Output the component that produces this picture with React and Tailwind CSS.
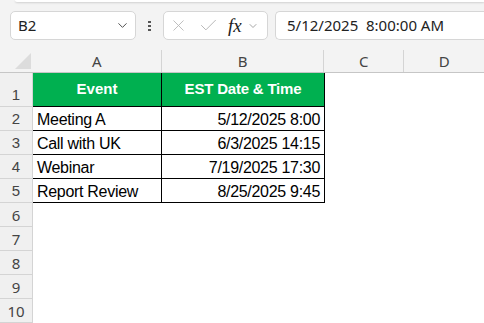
import { ChevronDown, X, Check } from "lucide-react";

const rows = [
    ["Meeting A", "5/12/2025 8:00"],
    ["Call with UK", "6/3/2025 14:15"],
    ["Webinar", "7/19/2025 17:30"],
    ["Report Review", "8/25/2025 9:45"],
];

function RowHead({ n, tall }) {
    return (
        <div
            className={`w-[33px] shrink-0 flex items-end justify-center border-r border-b border-[#d4d4d4] bg-[#f0f0f0] text-[15px] leading-[18px] text-[#444] pb-[2px] ${
                tall ? "h-[34px]" : "h-[24px]"
            }`}
        >
            {n}
        </div>
    );
}

function App() {
    return (
        <div className="w-[484px] h-[323px] overflow-hidden bg-[#f3f3f3] font-['Noto_Sans',sans-serif]">
            <div className="h-[2px] ml-[15px] bg-white rounded-bl-[4px] shadow-[0_1px_2px_rgba(0,0,0,0.15)]"></div>

            {/* formula bar */}
            <div className="flex items-center mt-[9px] h-[29px]">
                <div className="ml-[10px] w-[126px] h-[29px] flex items-center justify-between bg-white border border-[#d6d6d6] rounded-[5px] pl-[7px] pr-[5px]">
                    <span className="text-[15px] text-[#222]">B2</span>
                    <ChevronDown size={15} strokeWidth={1.5} className="text-[#444]" />
                </div>
                <div className="w-[27px] flex flex-col items-center gap-[2px]">
                    <span className="w-[3px] h-[2px] bg-[#555]"></span>
                    <span className="w-[3px] h-[2px] bg-[#555]"></span>
                    <span className="w-[3px] h-[2px] bg-[#555]"></span>
                </div>
                <div className="w-[105px] h-[29px] flex items-center bg-white border border-[#d6d6d6] rounded-[5px]">
                    <X size={19} strokeWidth={1.1} className="ml-[5px] text-[#b5b5b5]" />
                    <Check size={21} strokeWidth={1.1} className="ml-[10px] text-[#b5b5b5]" />
                    <span className="ml-[9px] text-[19px] italic text-[#222] font-['Liberation_Serif',serif] leading-none">
                        fx
                    </span>
                    <ChevronDown size={12} strokeWidth={1.5} className="ml-[5px] text-[#888]" />
                </div>
                <div className="ml-[7px] flex-1 h-[29px] flex items-center bg-white border border-[#d6d6d6] border-r-0 rounded-l-[5px] pl-[11px]">
                    <span className="text-[15px] text-[#222] whitespace-pre">5/12/2025  8:00:00 AM</span>
                </div>
            </div>

            {/* column headers */}
            <div className="flex mt-[10px] h-[23px] border-b border-[#c6c6c6] text-[15px] text-[#444]">
                <div className="w-[33px] shrink-0 relative">
                    <svg width="16" height="16" viewBox="0 0 16 16" className="absolute left-[15px] top-[3px]">
                        <polygon points="16,0 16,16 0,16" fill="#dcdcdc" />
                    </svg>
                </div>
                <div className="w-[129px] flex items-center justify-center border-r border-[#d4d4d4]">A</div>
                <div className="w-[163px] flex items-center justify-center border-r border-[#d4d4d4]">B</div>
                <div className="w-[80px] flex items-center justify-center border-r border-[#d4d4d4]">C</div>
                <div className="w-[80px] flex items-center justify-center">D</div>
            </div>

            {/* row 1 */}
            <div className="flex bg-white font-['Liberation_Sans',Arial,sans-serif]">
                <RowHead n={1} tall />
                <div className="w-[129px] h-[34px] flex items-center justify-center bg-[#00b050] text-white font-bold text-[15px] border-r border-b border-black">
                    Event
                </div>
                <div className="w-[163px] h-[34px] flex items-center justify-center bg-[#00b050] text-white font-bold text-[15px] tracking-[-0.2px] border-r border-b border-black">
                    EST Date &amp; Time
                </div>
            </div>

            {rows.map((r, i) => (
                <div key={i} className="flex bg-white font-['Liberation_Sans',Arial,sans-serif]">
                    <RowHead n={i + 2} />
                    <div className="w-[129px] h-[24px] flex items-end pl-[4px] pb-[1px] text-[16px] tracking-[-0.3px] leading-[18px] text-black border-r border-b border-black">
                        {r[0]}
                    </div>
                    <div className="w-[163px] h-[24px] flex items-end justify-end pr-[4px] pb-[1px] text-[16px] tracking-[-0.3px] leading-[18px] text-black border-r border-b border-black">
                        {r[1]}
                    </div>
                </div>
            ))}

            {[6, 7, 8, 9, 10].map((n) => (
                <div key={n} className="flex bg-white">
                    <RowHead n={n} />
                    <div className="flex-1"></div>
                </div>
            ))}
        </div>
    );
}

export default App;
